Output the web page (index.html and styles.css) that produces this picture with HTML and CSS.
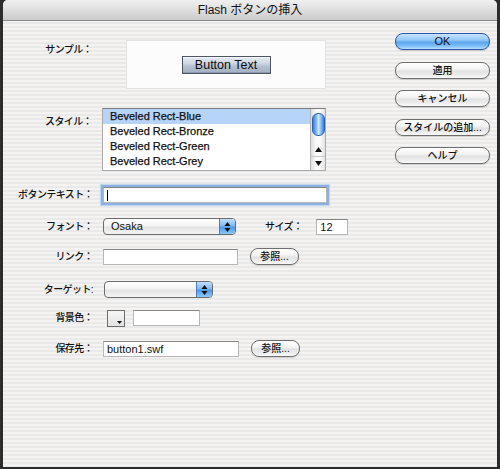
FILE: index.html
```html
<!DOCTYPE html>
<html lang="ja">
<head>
<meta charset="utf-8">
<title>Flash ボタンの挿入</title>
<link rel="stylesheet" href="styles.css">
</head>
<body>
<div class="window">
  <div class="titlebar"><span class="title">Flash ボタンの挿入</span></div>
  <div class="content">
    <div class="form">
      <div class="row row-top row-sample">
        <div class="label label-narrow label-sample">サンプル：</div>
        <div class="sample-box"><div class="sample-button">Button Text</div></div>
      </div>
      <div class="row row-top row-list">
        <div class="label label-narrow label-list">スタイル：</div>
        <div class="listbox">
          <div class="list-items">
            <div class="list-item selected">Beveled Rect-Blue</div>
            <div class="list-item">Beveled Rect-Bronze</div>
            <div class="list-item">Beveled Rect-Green</div>
            <div class="list-item">Beveled Rect-Grey</div>
          </div>
          <div class="scrollbar">
            <div class="thumb"></div>
            <div class="track-space"></div>
            <div class="arrow arrow-up"><svg width="7" height="5" viewBox="0 0 7 5"><path d="M3.5 0L7 5H0z" fill="#111"/></svg></div>
            <div class="arrow arrow-down"><svg width="7" height="5" viewBox="0 0 7 5"><path d="M0 0H7L3.5 5z" fill="#111"/></svg></div>
          </div>
        </div>
      </div>
      <div class="row row-text">
        <div class="label">ボタンテキスト：</div>
        <div class="field field-focus field-wide"><span class="caret"></span></div>
      </div>
      <div class="row row-font">
        <div class="label">フォント：</div>
        <div class="popup popup-font">
          <span class="popup-text">Osaka</span>
          <span class="popup-arrows"><svg width="7" height="10" viewBox="0 0 7 10"><path d="M3.5 0L6.5 4H0.5z M0.5 6H6.5L3.5 10z" fill="#111"/></svg></span>
        </div>
        <div class="label-inline label-size">サイズ：</div>
        <div class="field field-size"><span class="field-text">12</span></div>
      </div>
      <div class="row row-link">
        <div class="label">リンク：</div>
        <div class="field field-mid"></div>
        <div class="push-button browse">参照...</div>
      </div>
      <div class="row row-target">
        <div class="label">ターゲット:</div>
        <div class="popup popup-target">
          <span class="popup-text"></span>
          <span class="popup-arrows"><svg width="7" height="10" viewBox="0 0 7 10"><path d="M3.5 0L6.5 4H0.5z M0.5 6H6.5L3.5 10z" fill="#111"/></svg></span>
        </div>
      </div>
      <div class="row row-color">
        <div class="label">背景色：</div>
        <div class="swatch"><svg class="swatch-arrow" width="5" height="3" viewBox="0 0 5 3"><path d="M0 0H5L2.5 3z" fill="#111"/></svg></div>
        <div class="field field-color"></div>
      </div>
      <div class="row row-save">
        <div class="label">保存先：</div>
        <div class="field field-mid field-save"><span class="field-text">button1.swf</span></div>
        <div class="push-button browse">参照...</div>
      </div>
    </div>
    <div class="actions">
      <div class="push-button action default">OK</div>
      <div class="push-button action">適用</div>
      <div class="push-button action">キャンセル</div>
      <div class="push-button action">スタイルの追加...</div>
      <div class="push-button action">ヘルプ</div>
    </div>
  </div>
</div>
</body>
</html>
```

FILE: styles.css
```css
html, body {
  margin: 0;
  padding: 0;
}
body {
  width: 500px;
  height: 469px;
  overflow: hidden;
  background: #2c2c2c;
  font-family: "Liberation Sans", "Noto Sans CJK JP", sans-serif;
  color: #111;
}
.window {
  margin-left: 3px;
  width: 494px;
  height: 467px;
  border-radius: 5px 5px 0 0;
  overflow: hidden;
  display: flex;
  flex-direction: column;
  background: repeating-linear-gradient(to bottom, #f4f3f1 0, #f4f3f1 2px, #e9e9e9 2px, #e9e9e9 4px);
}
.titlebar {
  height: 20px;
  flex: none;
  border-bottom: 1px solid #8a8a8a;
  background: linear-gradient(#f0f0f0, #dcdcdc 55%, #cbcbcb);
  display: flex;
  align-items: center;
  justify-content: center;
}
.title {
  font-size: 12px;
  line-height: 14px;
  color: #111;
}
.content {
  flex: 1;
  display: flex;
}
.form {
  flex: 1;
}
.actions {
  width: 95px;
  flex: none;
  margin-right: 7px;
  padding-top: 12px;
  display: flex;
  flex-direction: column;
  gap: 11.5px;
}

/* rows */
.row {
  display: flex;
  align-items: center;
}
.row-top { align-items: flex-start; }
.row-sample { margin-top: 20px; }
.row-list { margin-top: 20px; }
.row-text { margin-top: 16px; height: 16px; }
.row-font { margin-top: 15px; height: 17px; }
.row-link { margin-top: 13px; height: 17px; }
.row-target { margin-top: 16px; height: 17px; }
.row-color { margin-top: 12px; height: 16px; }
.row-save { margin-top: 14px; height: 17px; }

.label {
  width: 90px;
  flex: none;
  text-align: right;
  font-size: 10px;
  line-height: 14px;
  letter-spacing: -0.6px;
  font-weight: 500;
  color: #111;
  white-space: nowrap;
}
.label-narrow { width: 89px; }
.label-sample { margin-top: 2px; }
.label-list { margin-top: 7px; }
.label-inline {
  font-size: 10px;
  line-height: 14px;
  letter-spacing: -0.6px;
  font-weight: 500;
  white-space: nowrap;
}
.label-size { margin-left: 29px; }

/* sample */
.sample-box {
  margin-left: 35px;
  width: 198px;
  height: 47px;
  background: #fcfcfc;
  box-shadow: 0 0 0 1px #e2e2e2;
  display: flex;
  justify-content: center;
  align-items: center;
}
.sample-button {
  width: 87px;
  height: 16px;
  border: 1px solid #4c5466;
  background: linear-gradient(#e4ebf3, #cdd7e3 40%, #b3bfcf 60%, #a3afc0);
  box-shadow: inset 0 1px 0 #f4f7fb, inset 0 -1px 0 #8d99ab;
  font-size: 12.5px;
  line-height: 16px;
  text-align: center;
  color: #0c0c0c;
}

/* list */
.listbox {
  margin-left: 10px;
  width: 222px;
  height: 61px;
  border: 1px solid #a9a9a9;
  border-top-color: #7e7e7e;
  background: #fff;
  display: flex;
  overflow: hidden;
}
.list-items {
  flex: 1;
}
.list-item {
  height: 15px;
  line-height: 15px;
  font-size: 11px;
  padding-left: 7px;
  color: #111;
  -webkit-text-stroke: 0.25px #111;
  white-space: nowrap;
}
.list-item.selected {
  background: #b6d4f8;
}
.scrollbar {
  width: 14px;
  flex: none;
  border-left: 1px solid #b5b5b5;
  background: linear-gradient(to right, #dcdcdc, #fafafa 35%, #fafafa 65%, #e4e4e4);
  display: flex;
  flex-direction: column;
  align-items: center;
}
.thumb {
  margin-top: 4px;
  width: 11px;
  height: 21px;
  border: 1px solid #2d5fb8;
  border-radius: 6px;
  background: linear-gradient(to right, #3f7fd8, #8cc3f8 35%, #d2eaff 50%, #7db8f4 75%, #3c78d2);
}
.track-space { flex: 1; }
.arrow {
  width: 14px;
  height: 13px;
  display: flex;
  align-items: center;
  justify-content: center;
}
.arrow-down { border-top: 1px solid #c8c8c8; }

/* text fields */
.field {
  height: 14px;
  margin-left: 10px;
  background: #fff;
  border: 1px solid #b7b7b7;
  border-top-color: #858585;
  display: flex;
  align-items: center;
  flex: none;
}
.field-text {
  font-size: 11px;
  line-height: 14px;
  padding-left: 3px;
  color: #111;
}
.field-wide { width: 222px; }
.field-focus {
  box-shadow: 0 0 0 2px #8cb1de, 0 0 1px 3px #c4d7ef;
}
.caret {
  display: block;
  width: 1px;
  height: 11px;
  margin-left: 3px;
  background: #000;
}
.field-size { width: 30px; margin-left: 14px; }
.field-mid { width: 133px; }
.field-color { width: 65px; margin-left: 8px; }
.field-save { width: 134px; }

/* popups */
.popup {
  margin-left: 10px;
  height: 15px;
  border: 1px solid #6c6c6c;
  border-radius: 4px;
  background: linear-gradient(#ffffff, #f3f3f3 45%, #e3e3e3 55%, #f4f4f4);
  display: flex;
  overflow: hidden;
  flex: none;
}
.popup-font { width: 131px; }
.popup-target { width: 107px; margin-left: 11px; }
.popup-text {
  flex: 1;
  padding-left: 7px;
  font-size: 11px;
  line-height: 15px;
}
.popup-arrows {
  width: 15px;
  border-left: 1px solid #4d7bc4;
  background: linear-gradient(#bfe0fd, #7fbaf3 45%, #4f98e6 55%, #8cc9fb);
  display: flex;
  align-items: center;
  justify-content: center;
}

/* swatch */
.swatch {
  margin-left: 14px;
  width: 16px;
  height: 15px;
  border: 1px solid #6d6d6d;
  background: linear-gradient(#f6f6f6, #e2e2e2);
  position: relative;
  flex: none;
}
.swatch-arrow {
  position: absolute;
  right: 2px;
  bottom: 2px;
}

/* aqua push buttons */
.push-button {
  height: 15px;
  border: 1px solid #6e6e6e;
  border-radius: 8px;
  background: linear-gradient(#ffffff, #f4f4f4 40%, #e2e2e2 55%, #ececec 80%, #fbfbfb);
  box-shadow: 0 1px 1px rgba(0,0,0,0.15);
  font-size: 10px;
  line-height: 15px;
  font-weight: 500;
  text-align: center;
  color: #111;
  white-space: nowrap;
  flex: none;
}
.browse {
  width: 47px;
  margin-left: 12px;
}
.action {
  width: 93px;
}
.default {
  border-color: #2c55a8;
  background: linear-gradient(#c8e4fe, #96c9f7 40%, #5da6ee 55%, #7cbdf7 80%, #b8e2ff);
  font-size: 11px;
}
```
